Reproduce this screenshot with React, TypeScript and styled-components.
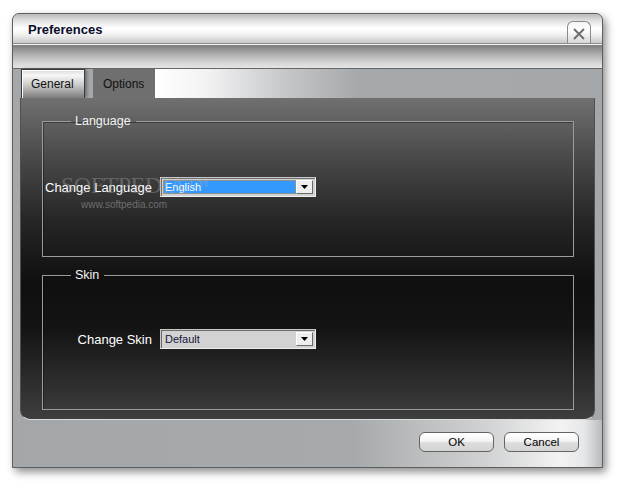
import React from "react";
import styled, { createGlobalStyle } from "styled-components";

const Global = createGlobalStyle`
  html, body { margin: 0; padding: 0; background: #ffffff; }
  body { font-family: "Liberation Sans", Arial, sans-serif; }
  * { box-sizing: border-box; }
`;

const Page = styled.div`
  width: 624px;
  height: 488px;
  padding: 13px 0 0 12px;
  background: #ffffff;
`;

const Window = styled.div`
  width: 591px;
  height: 455px;
  border: 1px solid #5e5e5e;
  border-radius: 7px 7px 0 0;
  display: flex;
  flex-direction: column;
  overflow: hidden;
  background: #a5a8aa;
  box-shadow: 3px 4px 9px rgba(0, 0, 0, 0.45);
`;

const TitleBar = styled.div`
  height: 30px;
  flex: none;
  display: flex;
  align-items: center;
  justify-content: space-between;
  padding-left: 15px;
  border-bottom: 1px solid #8c8c8c;
  background: linear-gradient(180deg, #b9b9b9 0%, #e4e4e4 25%, #ffffff 50%, #f2f2f2 70%, #c9c9c9 100%);
`;

const Title = styled.span`
  font-size: 13px;
  font-weight: bold;
  color: #0b0b2a;
  padding-top: 2px;
`;

const CloseButton = styled.div`
  align-self: flex-end;
  width: 24px;
  height: 22px;
  margin-right: 11px;
  border: 1px solid #8a8a8a;
  border-bottom: none;
  border-radius: 6px 6px 0 0;
  background: linear-gradient(180deg, #f4f4f4 0%, #ffffff 40%, #d6d6d6 100%);
  display: flex;
  align-items: center;
  justify-content: center;
  padding-top: 2px;
`;

const Toolbar = styled.div`
  height: 25px;
  flex: none;
  border-top: 1px solid #f6f6f6;
  border-bottom: 1px solid #666;
  background: linear-gradient(180deg, #7c7c7c 0%, #a8a8a8 35%, #d8d8d8 80%, #e4e4e4 100%);
`;

const Body = styled.div`
  flex: none;
  padding: 0 7px;
  display: flex;
  flex-direction: column;
  background: #a5a8aa;
`;

const TabRow = styled.div`
  height: 29px;
  display: flex;
  align-items: stretch;
`;

const Tab = styled.div<{ $active?: boolean }>`
  font-size: 12px;
  display: flex;
  align-items: center;
  color: #111;
  ${(p) =>
    p.$active
      ? `
    width: 62px;
    margin-left: 8px;
    padding-left: 10px;
    background: #6f6f6f;
  `
      : `
    width: 64px;
    margin-left: 1px;
    padding-left: 9px;
    border: 1px solid #3a3a3a;
    border-bottom: none;
    background: linear-gradient(180deg, #dcdcdc 0%, #f6f6f6 20%, #c8c8c8 55%, #7c7c7c 100%);
    box-shadow: 2px 0 3px rgba(0,0,0,0.35), inset 1px 1px 0 #ffffff;
  `}
`;

const TabFiller = styled.div`
  flex: 1;
  background: linear-gradient(90deg, #ffffff 0%, #f2f2f3 12%, #c4c6c8 30%, #a6a9ab 46%, #a5a8aa 100%);
`;

const Panel = styled.div`
  position: relative;
  height: 322px;
  padding: 16px 20px 0 21px;
  display: flex;
  flex-direction: column;
  gap: 11px;
  border: 1px solid #505050;
  border-top: none;
  border-bottom: 1px solid #dcdcdc;
  border-radius: 0 0 10px 10px;
  background: linear-gradient(180deg, #707070 0%, #4a4a4a 18%, #262626 38%, #0f0f0f 58%, #141414 72%, #2c2c2c 88%, #3e3e3e 100%);
`;

const Group = styled.fieldset<{ $top: number; $bottom: number }>`
  margin: 0;
  padding: ${(p) => p.$top}px 0 ${(p) => p.$bottom}px 0;
  border: 1px solid #9c9c9c;
  box-shadow: inset 1px 1px 0 rgba(0, 0, 0, 0.35);
  min-width: 0;
`;

const Legend = styled.legend`
  margin-left: 28px;
  padding: 0 5px 0 4px;
  font-size: 12.5px;
  line-height: 14px;
  color: #f4f4f4;
`;

const FieldRow = styled.div`
  display: flex;
  align-items: center;
`;

const Label = styled.span`
  width: 109px;
  margin-right: 8px;
  text-align: right;
  font-size: 13px;
  color: #ffffff;
  white-space: nowrap;
`;

const Select = styled.div`
  width: 156px;
  height: 20px;
  padding: 2px;
  display: flex;
  border: 1px solid #efefef;
  border-top-color: #c8c8c8;
  border-left-color: #c8c8c8;
  box-shadow: inset 1px 1px 0 #6c6c6c;
  background: #d2d2d2;
`;

const SelectValue = styled.div<{ $focused?: boolean }>`
  flex: 1;
  display: flex;
  align-items: center;
  padding-left: 2px;
  font-size: 11px;
  ${(p) =>
    p.$focused
      ? `
    background: #3399ff;
    color: #ffffff;
    outline: 1px dotted #e48a22;
    outline-offset: -1px;
  `
      : `
    background: #d2d2d2;
    color: #15153a;
  `}
`;

const SelectArrow = styled.div`
  width: 17px;
  display: flex;
  align-items: center;
  justify-content: center;
  background: #eeeeee;
  border: 1px solid;
  border-color: #ffffff #6a6a6a #6a6a6a #ffffff;
`;

const Watermark = styled.div`
  position: absolute;
  left: 40px;
  top: 75px;
  pointer-events: none;
  display: flex;
  flex-direction: column;
  gap: 2px;
`;

const WatermarkLogo = styled.span`
  font-family: "Liberation Serif", "Times New Roman", serif;
  font-size: 24px;
  letter-spacing: -0.5px;
  color: rgba(175, 175, 175, 0.36);
  line-height: 24px;
`;

const WatermarkUrl = styled.span`
  margin-left: 20px;
  font-size: 10px;
  color: #6e6e6e;
`;

const Footer = styled.div`
  flex: 1;
  display: flex;
  justify-content: flex-end;
  align-items: flex-start;
  gap: 10px;
  padding: 12px 23px 0 0;
  background: linear-gradient(90deg, #a4a7a9 0%, #a7aaac 58%, #cfd1d2 80%, #f3f3f3 93%, #e6e7e8 97%, #b9bcbe 100%);
`;

const Button = styled.button`
  width: 75px;
  height: 20px;
  padding: 0;
  border: 1px solid #646464;
  border-radius: 6px;
  font-family: "Liberation Sans", Arial, sans-serif;
  font-size: 11.5px;
  color: #000;
  background: linear-gradient(180deg, #ffffff 0%, #f4f4f4 45%, #dcdcdc 55%, #d4d4d4 100%);
  box-shadow: inset 0 1px 0 #ffffff;
`;

const Arrow = () => (
  <svg width="8" height="5" viewBox="0 0 8 5">
    <path d="M0 0 H7 L3.5 4 Z" fill="#000" />
  </svg>
);

const CloseIcon = () => (
  <svg width="14" height="12" viewBox="0 0 14 12">
    <path d="M2 1 L12 11 M12 1 L2 11" stroke="#6e6e6e" strokeWidth="2" />
  </svg>
);

export default function App() {
  return (
    <>
      <Global />
      <Page>
        <Window>
          <TitleBar>
            <Title>Preferences</Title>
            <CloseButton>
              <CloseIcon />
            </CloseButton>
          </TitleBar>
          <Toolbar />
          <Body>
            <TabRow>
              <Tab>General</Tab>
              <Tab $active>Options</Tab>
              <TabFiller />
            </TabRow>
            <Panel>
              <Group $top={49} $bottom={59}>
                <Legend>Language</Legend>
                <FieldRow>
                  <Label>Change Language</Label>
                  <Select>
                    <SelectValue $focused>English</SelectValue>
                    <SelectArrow>
                      <Arrow />
                    </SelectArrow>
                  </Select>
                </FieldRow>
              </Group>
              <Group $top={47} $bottom={60}>
                <Legend>Skin</Legend>
                <FieldRow>
                  <Label>Change Skin</Label>
                  <Select>
                    <SelectValue>Default</SelectValue>
                    <SelectArrow>
                      <Arrow />
                    </SelectArrow>
                  </Select>
                </FieldRow>
              </Group>
              <Watermark>
                <WatermarkLogo>SOFTPEDIA™</WatermarkLogo>
                <WatermarkUrl>www.softpedia.com</WatermarkUrl>
              </Watermark>
            </Panel>
          </Body>
          <Footer>
            <Button>OK</Button>
            <Button>Cancel</Button>
          </Footer>
        </Window>
      </Page>
    </>
  );
}
